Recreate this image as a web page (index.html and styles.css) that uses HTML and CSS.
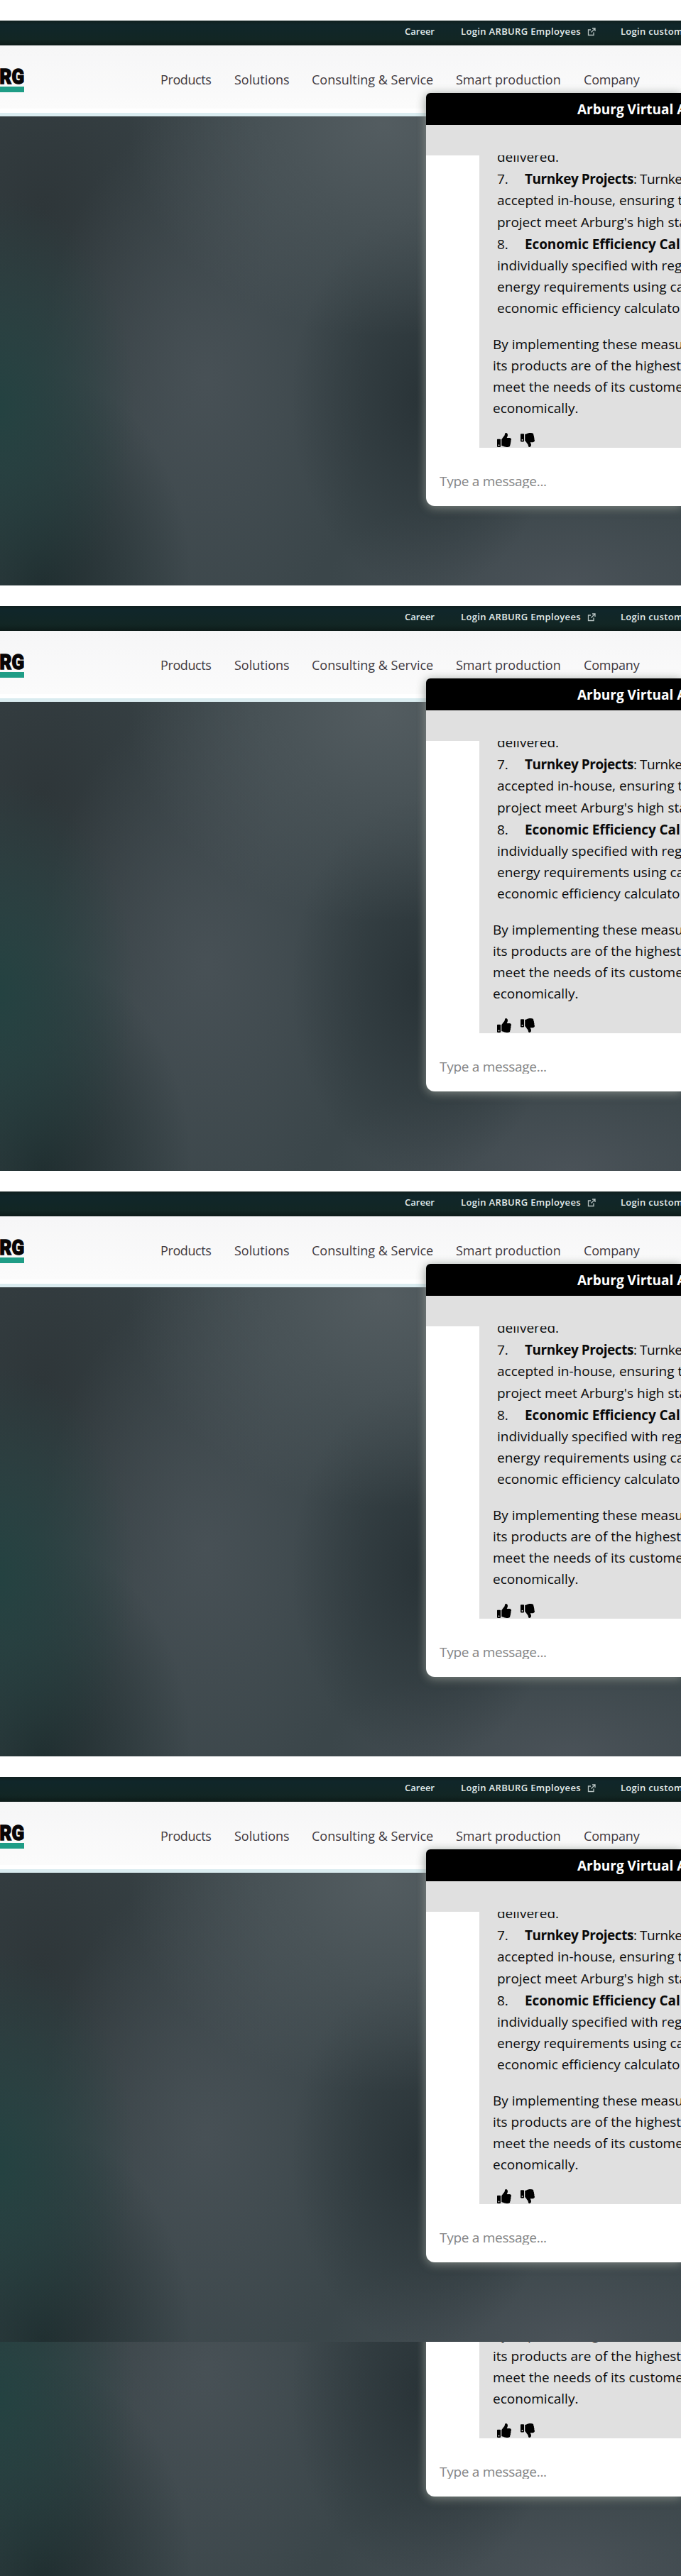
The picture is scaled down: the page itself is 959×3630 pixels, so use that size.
FILE: index.html
```html
<!DOCTYPE html>
<html lang="en">
<head>
<meta charset="utf-8">
<title>Arburg</title>
<link rel="stylesheet" href="styles.css">
</head>
<body>
<template id="screen">
  <div class="topbar">
    <span class="career">Career</span>
    <span class="employees">Login ARBURG Employees</span>
    <svg class="external" viewBox="0 0 12 12" width="12" height="12"><path d="M5 3H1.5v7.500h7.500V6.500M7 1h4v4M11 1L5.500 6.500"/></svg>
    <span class="customers">Login custom</span>
  </div>
  <header class="header">
    <div class="logo"><span class="logo-text">RG</span></div>
    <nav class="nav">
      <a class="n1">Products</a><a class="n2">Solutions</a><a class="n3">Consulting &amp; Service</a><a class="n4">Smart production</a><a class="n5">Company</a>
    </nav>
  </header>
  <div class="rule"></div>
  <main class="hero">
    <section class="chat">
      <h1 class="chat-title">Arburg Virtual A</h1>
      <div class="chat-band"></div>
      <div class="messages">
        <div class="bubble">
          <div class="list">
            <p>delivered.</p>
            <p class="head"><span class="num">7.</span><span class="turnkey"><b>Turnkey Projects</b>: Turnke</span></p>
            <p>accepted in-house, ensuring t</p>
            <p>project meet Arburg's high sta</p>
            <p class="head"><span class="num">8.</span><b class="economic">Economic Efficiency Cal</b></p>
            <p>individually specified with reg</p>
            <p>energy requirements using ca</p>
            <p>economic efficiency calculato</p>
          </div>
          <div class="closing">
            <p>By implementing these measu</p>
            <p>its products are of the highest</p>
            <p>meet the needs of its custome</p>
            <p>economically.</p>
          </div>
          <div class="votes">
            <svg viewBox="0 0 512 512" width="20" height="20"><path d="M104 224H24c-13.255 0-24 10.745-24 24v240c0 13.255 10.745 24 24 24h80c13.255 0 24-10.745 24-24V248c0-13.255-10.745-24-24-24zM64 472c-13.255 0-24-10.745-24-24s10.745-24 24-24 24 10.745 24 24-10.745 24-24 24zM384 81.452c0 42.416-25.97 66.208-33.277 94.548h101.723c33.397 0 59.397 27.746 59.553 58.098.084 17.938-7.546 37.249-19.439 49.197l-.11.11c9.836 23.337 8.237 56.037-9.308 79.469 8.681 25.895-.069 57.704-16.382 74.757 4.298 17.598 2.244 32.575-6.148 44.632C440.202 511.587 389.616 512 346.839 512l-2.845-.001c-48.287-.017-87.806-17.598-119.56-31.725-15.957-7.099-36.821-15.887-52.651-16.178-6.54-.12-11.783-5.457-11.783-11.998v-213.77c0-3.2 1.282-6.271 3.558-8.521 39.614-39.144 56.648-80.587 89.117-113.111 14.804-14.832 20.188-37.236 25.393-58.902C282.515 39.293 291.817 0 312 0c24 0 72 8 72 81.452z"/></svg>
            <svg viewBox="0 0 512 512" width="20" height="20"><path d="M0 56v240c0 13.255 10.745 24 24 24h80c13.255 0 24-10.745 24-24V56c0-13.255-10.745-24-24-24H24C10.745 32 0 42.745 0 56zm40 200c0-13.255 10.745-24 24-24s24 10.745 24 24-10.745 24-24 24-24-10.745-24-24zm272 256c-20.183 0-29.485-39.293-33.931-57.795-5.206-21.666-10.589-44.07-25.393-58.902-32.469-32.524-49.503-73.967-89.117-113.111a11.98 11.98 0 0 1-3.558-8.521V59.901c0-6.541 5.243-11.878 11.783-11.998 15.831-.29 36.694-9.079 52.651-16.178C256.189 17.598 295.709.017 343.995 0h2.844c42.777 0 93.363.413 113.774 29.737 8.392 12.057 10.446 27.034 6.148 44.632 16.312 17.053 25.063 48.863 16.382 74.757 17.544 23.432 19.143 56.132 9.308 79.469l.11.11c11.893 11.949 19.523 31.259 19.439 49.197-.156 30.352-26.157 58.098-59.553 58.098H350.723C358.03 364.34 384 388.132 384 430.548 384 504 336 512 312 512z"/></svg>
          </div>
        </div>
      </div>
      <div class="composer"><div class="placeholder">Type a message...</div></div>
    </section>
  </main>
</template>
<div class="screen"></div>
<div class="screen"></div>
<div class="screen"></div>
<div class="screen"></div>
<div class="tail"><div class="screen"></div></div>
<script src="screens.js"></script>
</body>
</html>
```
FILE: screens.js
```js
const screenTemplate = document.getElementById('screen');
document.querySelectorAll('.screen').forEach(function (el) {
  el.appendChild(screenTemplate.content.cloneNode(true));
});
```
FILE: styles.css
```css
* { box-sizing: border-box; }
body {
  margin: 0;
  background: #fff;
  font-family: "Open Sans", "Noto Sans", sans-serif;
  overflow-x: hidden;
}
p, h1 { margin: 0; }
.screen {
  height: 825px;
  padding-top: 29px;
  overflow: hidden;
  display: flex;
  flex-direction: column;
  flex: none;
  background: #fff;
}
.tail {
  height: 330px;
  overflow: hidden;
  display: flex;
  flex-direction: column;
  justify-content: flex-end;
}

.topbar {
  height: 35px;
  flex: none;
  display: flex;
  padding: 0 0 5px 570px;
  background: linear-gradient(#10201f 0, #10262a 18%, #122624 75%, #0d1b19 100%);
  color: #e4eceb;
  font-size: 13px;
  font-weight: 600;
  line-height: 30px;
  white-space: nowrap;
  overflow: hidden;
}
.career { width: 79px; flex: none; }
.employees { width: 178px; flex: none; letter-spacing: 0.35px; }
.external {
  flex: none;
  margin: 10px 35px 0 0;
  fill: none;
  stroke: #b9c4c3;
  stroke-width: 1.3;
}
.customers { flex: none; letter-spacing: 0.3px; }

.header {
  height: 89px;
  flex: none;
  display: flex;
  background: linear-gradient(#f6f6f7, #fbfbfb);
}
.logo {
  width: 34px;
  height: 66px;
  margin-right: 192px;
  flex: none;
  display: flex;
  justify-content: flex-end;
  border-bottom: 8px solid #1f9d86;
  padding-top: 26px;
}
.logo-text {
  font: 900 30px/35px Roboto, sans-serif;
  transform: scaleX(0.86);
  transform-origin: right;
  color: #080506;
  -webkit-text-stroke: 1.5px #080506;
}
.nav {
  display: flex;
  font-size: 18px;
  line-height: 30px;
  padding-top: 33px;
  color: #403a41;
  white-space: nowrap;
}
.n1 { width: 104px; letter-spacing: -0.4px; }
.n2 { width: 109px; }
.n3 { width: 203px; }
.n4 { width: 180px; }
.n5 { letter-spacing: -0.2px; }
.rule {
  height: 11px;
  flex: none;
  background: #fff;
  border-bottom: 5px solid #daecf0;
}

.hero {
  height: 661px;
  flex: none;
  padding-left: 600px;
  background:
    radial-gradient(ellipse 360px 300px at 540px 10px, rgba(86, 95, 99, 0.9), rgba(86, 95, 99, 0) 100%),
    radial-gradient(ellipse 190px 300px at 0 410px, rgba(36, 66, 65, 1), rgba(36, 66, 65, 0) 100%),
    radial-gradient(ellipse 210px 300px at 60px 661px, rgba(32, 45, 47, 1), rgba(32, 45, 47, 0) 100%),
    radial-gradient(ellipse 190px 270px at 600px 400px, rgba(41, 51, 55, 1), rgba(41, 51, 55, 0) 100%),
    radial-gradient(ellipse 230px 380px at 290px 370px, rgba(72, 81, 86, 0.95), rgba(72, 81, 86, 0) 100%),
    radial-gradient(ellipse 320px 380px at 60px 130px, rgba(46, 54, 57, 1), rgba(46, 54, 57, 0) 100%),
    radial-gradient(ellipse 340px 150px at 800px 661px, rgba(74, 82, 88, 1), rgba(74, 82, 88, 0) 100%),
    #3b464a;
}

.chat {
  width: 359px;
  height: 582px;
  margin-top: -33px;
  position: relative;
  display: flex;
  flex-direction: column;
  background: #fff;
  border-radius: 6px 0 0 12px;
  box-shadow: 0 5px 15px rgba(0, 0, 0, 0.15), 0 2px 14px rgba(160, 168, 162, 0.9);
}
.chat-title {
  height: 45px;
  padding-left: 213px;
  background: #000;
  color: #fff;
  border-radius: 6px 0 0 0;
  font-size: 19px;
  font-weight: 700;
  line-height: 47px;
  white-space: nowrap;
  overflow: hidden;
}
.chat-band { height: 43px; background: #e0e0e0; }
.messages {
  height: 412px;
  padding-left: 75px;
  overflow: hidden;
}
.bubble {
  height: 412px;
  background: #e0e0e0;
  padding-left: 19px;
  overflow: hidden;
  color: #0a0a0a;
  font-size: 19px;
  line-height: 30.2px;
  white-space: nowrap;
}
.list { padding-left: 6px; margin-top: -13px; }
.head { display: flex; padding-top: 1px; }
.num { width: 39px; flex: none; }
.turnkey { letter-spacing: -0.45px; }
.economic { letter-spacing: -0.1px; }
.closing { margin-top: 20px; }
.votes {
  display: flex;
  gap: 13px;
  padding: 20px 0 0 6px;
}
.composer { padding: 35px 19px 0; }
.placeholder {
  height: 22px;
  overflow: hidden;
  color: #858585;
  font-size: 19px;
  letter-spacing: -0.28px;
  line-height: 24px;
}
```
